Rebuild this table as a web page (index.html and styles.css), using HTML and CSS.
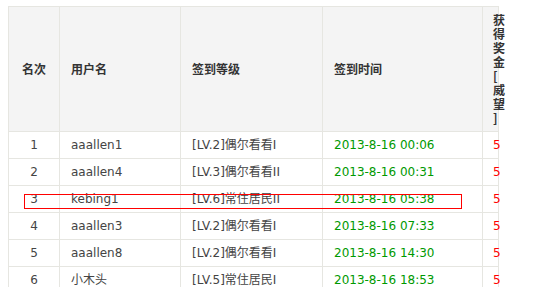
FILE: index.html
```html
<!DOCTYPE html>
<html lang="zh">
<head>
<meta charset="utf-8">
<title>签到排行</title>
<link rel="stylesheet" href="styles.css">
</head>
<body>
<div class="wrap">
  <table class="rank">
    <colgroup>
      <col class="c-rank">
      <col class="c-user">
      <col class="c-level">
      <col class="c-time">
      <col class="c-prize">
    </colgroup>
    <thead>
      <tr>
        <th class="num">名次</th>
        <th>用户名</th>
        <th>签到等级</th>
        <th>签到时间</th>
        <th class="prize">获得奖金[威望]</th>
      </tr>
    </thead>
    <tbody>
      <tr><td class="num">1</td><td>aaallen1</td><td>[LV.2]偶尔看看I</td><td class="time">2013-8-16 00:06</td><td class="prize">5</td></tr>
      <tr><td class="num">2</td><td>aaallen4</td><td>[LV.3]偶尔看看II</td><td class="time">2013-8-16 00:31</td><td class="prize">5</td></tr>
      <tr><td class="num">3</td><td>kebing1</td><td>[LV.6]常住居民II</td><td class="time">2013-8-16 05:38</td><td class="prize">5</td></tr>
      <tr><td class="num">4</td><td>aaallen3</td><td>[LV.2]偶尔看看I</td><td class="time">2013-8-16 07:33</td><td class="prize">5</td></tr>
      <tr><td class="num">5</td><td>aaallen8</td><td>[LV.2]偶尔看看I</td><td class="time">2013-8-16 14:30</td><td class="prize">5</td></tr>
      <tr><td class="num">6</td><td>小木头</td><td>[LV.5]常住居民I</td><td class="time">2013-8-16 18:53</td><td class="prize">5</td></tr>
    </tbody>
  </table>
  <div class="mark"></div>
</div>
</body>
</html>
```

FILE: styles.css
```css
html, body {
  margin: 0;
  background: #fff;
}
body {
  padding: 6px 0 0 8px;
  font-family: "DejaVu Sans", "Noto Sans CJK SC", sans-serif;
  font-size: 12px;
  color: #444;
  overflow: hidden;
}
.wrap {
  position: relative;
  width: 490px;
}
.rank {
  border-collapse: collapse;
  table-layout: fixed;
  width: 490px;
}
.c-rank { width: 51px; }
.c-user { width: 121px; }
.c-level { width: 142px; }
.c-time { width: 160px; }
.c-prize { width: 16px; }
.rank th,
.rank td {
  border: 1px solid #e6e6e1;
  padding: 6px 0 6px 11px;
  line-height: 14px;
  text-align: left;
  white-space: nowrap;
  overflow: visible;
}
.rank th {
  background: #f4f4f4;
  font-family: "Noto Sans CJK SC", sans-serif;
  font-weight: bold;
  color: #333;
  vertical-align: middle;
}
.rank th.num,
.rank td.num {
  text-align: center;
  padding-left: 0;
}
.rank th.prize {
  white-space: normal;
  line-break: anywhere;
  word-break: break-all;
  padding-left: 10px;
}
.rank td.prize {
  color: #f00;
  padding-left: 10px;
}
.rank td.time {
  color: #090;
}
.mark {
  position: absolute;
  left: 16px;
  top: 188px;
  width: 436px;
  height: 13px;
  border: 1px solid #f00;
}
```
